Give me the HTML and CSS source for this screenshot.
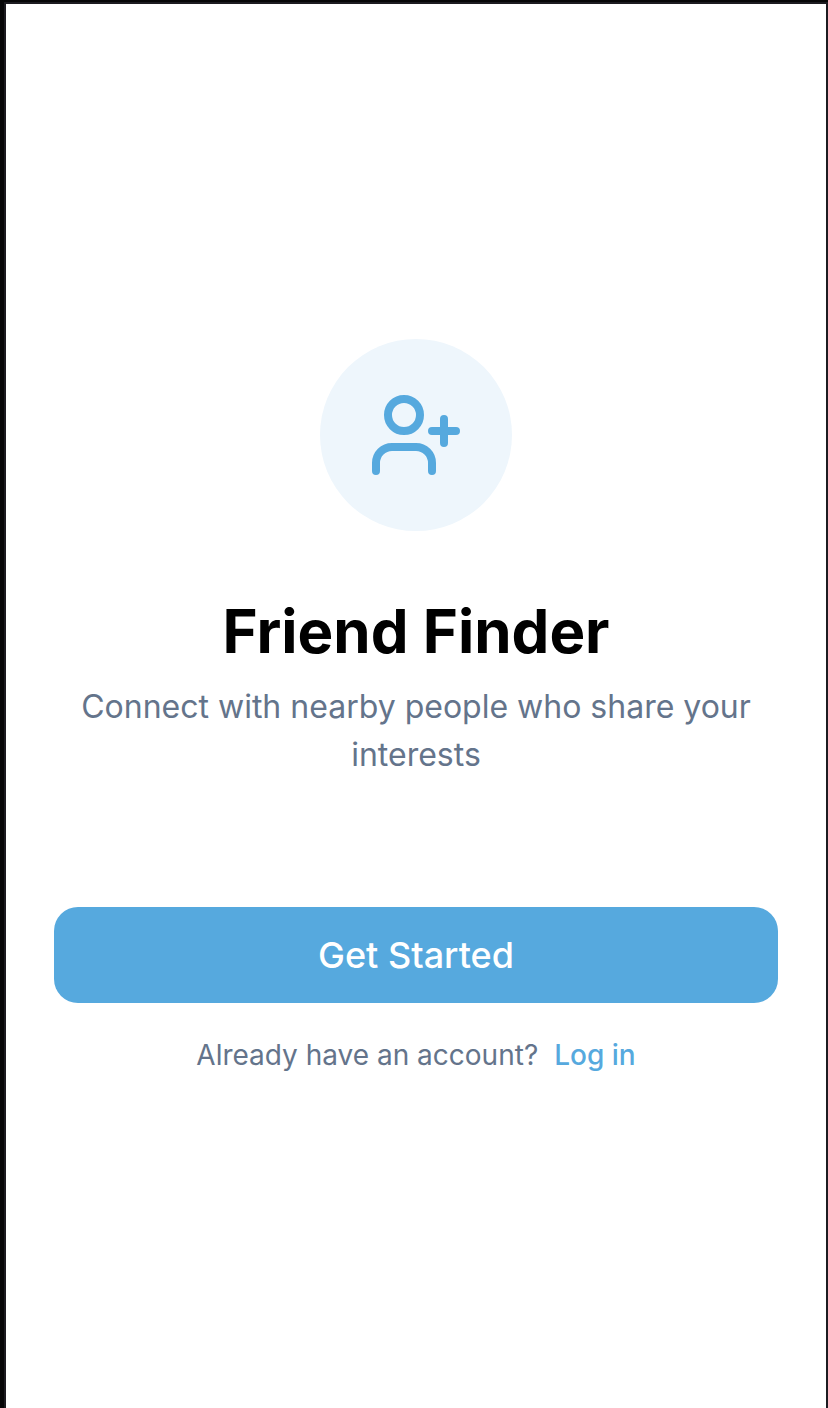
FILE: index.html
```html
<!DOCTYPE html>
<html lang="en">
<head>
<meta charset="utf-8">
<title>Friend Finder</title>
<link rel="stylesheet" href="styles.css">
</head>
<body>
<main class="screen">
  <div class="badge">
    <svg class="badge-icon" viewBox="0 0 24 24" fill="none" stroke="currentColor" stroke-width="2" stroke-linecap="round" stroke-linejoin="round">
      <path d="M16 21v-2a4 4 0 0 0-4-4H6a4 4 0 0 0-4 4v2"/>
      <circle cx="9" cy="7" r="4"/>
      <path d="M19 8v6M22 11h-6"/>
    </svg>
  </div>
  <h1 class="title">Friend Finder</h1>
  <p class="tagline">Connect with nearby people who share your interests</p>
  <button class="start" type="button">Get Started</button>
  <p class="login"><span>Already have an account?</span><a class="login-link">Log in</a></p>
</main>
</body>
</html>
```

FILE: styles.css
```css
* { box-sizing: border-box; }
body {
  margin: 0;
  padding: 2px 0 0 4px;
  background: #060607;
  font-family: Inter, sans-serif;
}
.screen {
  display: flex;
  flex-direction: column;
  align-items: center;
  height: 1406px;
  padding: 335px 48px 0;
  border: solid #1c1b20;
  border-width: 2px 2px 0 2px;
  background: #fff;
}
.badge {
  display: flex;
  align-items: center;
  justify-content: center;
  width: 192px;
  height: 192px;
  border-radius: 50%;
  background: #eef6fc;
}
.badge-icon { width: 96px; height: 96px; color: #56a9de; }
.title {
  margin: 64px 0 0;
  font-size: 60px;
  line-height: 72px;
  font-weight: 700;
  color: #000;
}
.tagline {
  margin: 16px 0 0;
  font-size: 32px;
  line-height: 48px;
  text-align: center;
  color: #64748b;
}
.start {
  width: 724px;
  height: 96px;
  margin-top: 128px;
  padding: 0;
  border: 0;
  border-radius: 24px;
  background: #56a9de;
  color: #fff;
  font: 500 36px/56px Inter, sans-serif;
}
.login {
  display: flex;
  gap: 16px;
  margin: 32px 0 0;
  font-size: 28px;
  line-height: 40px;
  color: #64748b;
}
.login-link { font-weight: 500; color: #56a9de; }
```
